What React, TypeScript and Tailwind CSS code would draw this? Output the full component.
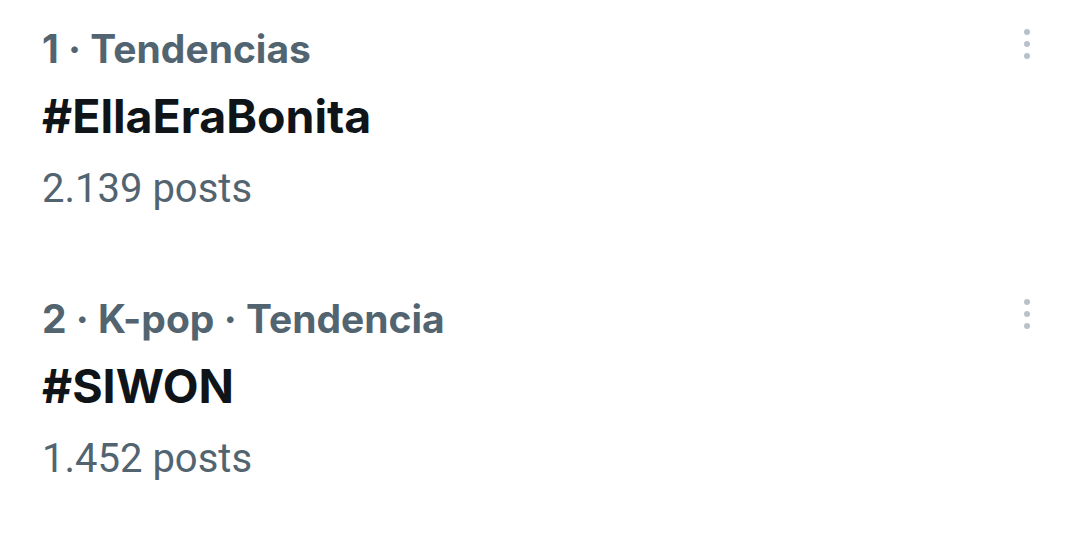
const trends = [
  { meta: "1 · Tendencias", tag: "#EllaEraBonita", posts: "2.139 posts" },
  { meta: "2 · K-pop · Tendencia", tag: "#SIWON", posts: "1.452 posts" },
];

function MoreIcon() {
  return (
    <svg width="12" height="36" viewBox="0 0 12 36" className="text-[#b9c2ca]">
      <circle cx="6" cy="6" r="3" fill="currentColor" />
      <circle cx="6" cy="18" r="3" fill="currentColor" />
      <circle cx="6" cy="30" r="3" fill="currentColor" />
    </svg>
  );
}

export default function App() {
  return (
    <div className="w-[1075px] h-[558px] bg-white overflow-hidden pt-[24px]">
      {trends.map((t) => (
        <div key={t.tag} className="flex justify-between pl-[42px] pr-[42px] h-[270px]">
          <div className="flex flex-col">
            <div className="font-['Inter',sans-serif] text-[39px] leading-[50px] font-bold text-[#536471]">
              {t.meta}
            </div>
            <div className="font-['Inter',sans-serif] text-[46.5px] leading-[72px] font-bold text-[#0f1419] mt-[6px]">
              {t.tag}
            </div>
            <div className="font-['Roboto',sans-serif] text-[40px] leading-[66px] text-[#536471] mt-[4px]">
              {t.posts}
            </div>
          </div>
          <div className="pt-[2px]">
            <MoreIcon />
          </div>
        </div>
      ))}
    </div>
  );
}
